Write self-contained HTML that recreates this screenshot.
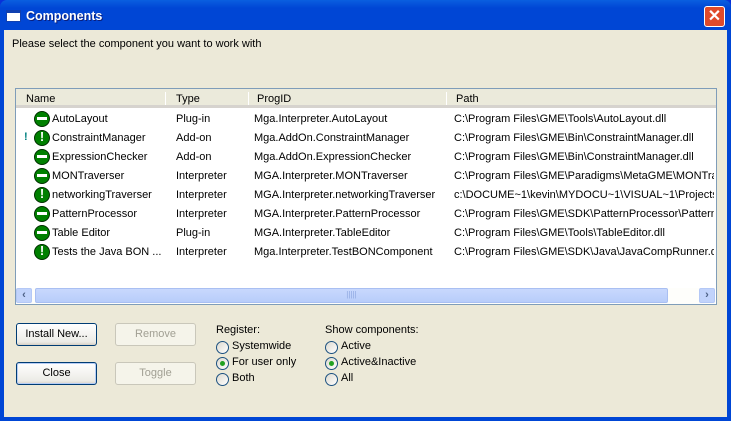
<!DOCTYPE html>
<html><head><style>
*{margin:0;padding:0;box-sizing:border-box}
body{width:731px;height:421px;overflow:hidden;font-family:Tahoma,"Liberation Sans",sans-serif;font-size:11px;color:#000;background:#0831d9}
.win{position:absolute;left:0;top:0;width:731px;height:421px;background:linear-gradient(#0a5fe0,#0046d5 8px,#0046d5);border-radius:7px 7px 0 0}
.title{position:absolute;left:26px;top:9px;color:#fff;font-weight:bold;font-size:12.5px;font-family:"Liberation Sans",sans-serif;text-shadow:1px 1px #0a1e7a}
.ticon{position:absolute;left:6px;top:10px;width:15px;height:12px;background:#fff;border:1px solid #1040b0;border-top-width:3px}
.close{position:absolute;left:704px;top:6px;width:21px;height:21px;background:#e04a2a;border:1px solid #fff;border-radius:3px;color:#fff;font-weight:bold;font-size:16px;line-height:19px;text-align:center}
.client{position:absolute;left:4px;top:30px;width:723px;height:387px;background:#ece9d8}
.abs{position:absolute;white-space:nowrap}
.list{position:absolute;left:15px;top:88px;width:702px;height:217px;background:#fff;border:1px solid #7f9db9;overflow:hidden}
.hdr{position:absolute;left:0;top:0;width:700px;height:19px;background:#ebeadb;border-bottom:3px solid #d6d3ce}
.sep{position:absolute;top:3px;width:1px;height:13px;background:#c7c5b2;border-right:1px solid #fff}
.ic{position:absolute;width:16px;height:16px;border-radius:50%;background:#008000;border:1px solid #003000}
.ic.m::after{content:"";position:absolute;left:2px;top:5px;width:10px;height:3px;background:#fff}
.ic.e::after{content:"!";position:absolute;left:0;top:-2px;width:14px;text-align:center;color:#fff;font-weight:bold;font-size:13px}
.btn{position:absolute;width:81px;height:23px;border:1px solid #003c74;border-radius:3px;background:linear-gradient(#fff,#ecebe6 85%,#d6d0c5);text-align:center;line-height:21px}
.btn.dis{border-color:#c9c7ba;color:#a19f93;background:#f5f4ea}
.btn.def{box-shadow:inset 0 0 0 1px #b6cdf5}
.rad{position:absolute;width:13px;height:13px;border-radius:50%;border:1px solid #1c5180;background:linear-gradient(135deg,#dcd9cf,#fff)}
.rad.on::after{content:"";position:absolute;left:3px;top:3px;width:5px;height:5px;border-radius:50%;background:#21a121}
</style></head><body>
<div class="win">
<div class="ticon"></div>
<div class="title">Components</div>
<div class="close">✕</div>
<div class="client"></div>
<div class="abs" style="left:12px;top:38px">Please select the component you want to work with</div>
<div class="list">
<div class="hdr">
<div class="abs" style="left:10px;top:4px">Name</div>
<div class="sep" style="left:149px"></div>
<div class="abs" style="left:160px;top:4px">Type</div>
<div class="sep" style="left:232px"></div>
<div class="abs" style="left:241px;top:4px">ProgID</div>
<div class="sep" style="left:430px"></div>
<div class="abs" style="left:440px;top:4px">Path</div>
</div>
</div>
<div class="abs" style="left:16px;top:288px;width:699px;height:16px;background:#fefefb"></div>
<div class="abs" style="left:16px;top:288px;width:16px;height:15px;background:#c1d3fb;border:1px solid #b4c8f6;border-radius:2px;color:#4d6185;font-weight:bold;text-align:center;line-height:12px">‹</div>
<div class="abs" style="left:35px;top:288px;width:633px;height:15px;background:linear-gradient(#c8d8fd,#b8cdfa);border:1px solid #a9bff2;border-radius:2px;color:#8fa8e0;text-align:center;font-size:8px;line-height:12px">|||||</div>
<div class="abs" style="left:699px;top:288px;width:16px;height:15px;background:#c1d3fb;border:1px solid #b4c8f6;border-radius:2px;color:#4d6185;font-weight:bold;text-align:center;line-height:12px">›</div>
<div class="btn" style="left:16px;top:323px">Install New...</div>
<div class="btn dis" style="left:115px;top:323px">Remove</div>
<div class="btn def" style="left:16px;top:362px">Close</div>
<div class="btn dis" style="left:115px;top:362px">Toggle</div>
<div class="abs" style="left:216px;top:324px">Register:</div>
<div class="rad" style="left:216px;top:341px"></div><div class="abs" style="left:232px;top:340px">Systemwide</div>
<div class="rad on" style="left:216px;top:357px"></div><div class="abs" style="left:232px;top:356px">For user only</div>
<div class="rad" style="left:216px;top:373px"></div><div class="abs" style="left:232px;top:372px">Both</div>
<div class="abs" style="left:325px;top:324px">Show components:</div>
<div class="rad" style="left:325px;top:341px"></div><div class="abs" style="left:341px;top:340px">Active</div>
<div class="rad on" style="left:325px;top:357px"></div><div class="abs" style="left:341px;top:356px">Active&amp;Inactive</div>
<div class="rad" style="left:325px;top:373px"></div><div class="abs" style="left:341px;top:372px">All</div>
</div>
<div style="position:absolute;left:0;top:1px">
<div class="ic m" style="left:34px;top:110px;position:absolute"></div>
<div class="abs" style="left:52px;top:112px">AutoLayout</div><div class="abs" style="left:176px;top:112px">Plug-in</div><div class="abs" style="left:254px;top:112px">Mga.Interpreter.AutoLayout</div><div class="abs" style="left:454px;top:112px">C:\Program Files\GME\Tools\AutoLayout.dll</div>
<div class="abs" style="left:24px;top:130px;color:#008080;font-weight:bold">!</div>
<div class="ic e" style="left:34px;top:129px;position:absolute"></div>
<div class="abs" style="left:52px;top:131px">ConstraintManager</div><div class="abs" style="left:176px;top:131px">Add-on</div><div class="abs" style="left:254px;top:131px">Mga.AddOn.ConstraintManager</div><div class="abs" style="left:454px;top:131px">C:\Program Files\GME\Bin\ConstraintManager.dll</div>
<div class="ic m" style="left:34px;top:148px;position:absolute"></div>
<div class="abs" style="left:52px;top:150px">ExpressionChecker</div><div class="abs" style="left:176px;top:150px">Add-on</div><div class="abs" style="left:254px;top:150px">Mga.AddOn.ExpressionChecker</div><div class="abs" style="left:454px;top:150px">C:\Program Files\GME\Bin\ConstraintManager.dll</div>
<div class="ic m" style="left:34px;top:167px;position:absolute"></div>
<div class="abs" style="left:52px;top:169px">MONTraverser</div><div class="abs" style="left:176px;top:169px">Interpreter</div><div class="abs" style="left:254px;top:169px">MGA.Interpreter.MONTraverser</div><div class="abs" style="left:454px;top:169px;width:260px;overflow:hidden">C:\Program Files\GME\Paradigms\MetaGME\MONTraverser</div>
<div class="ic e" style="left:34px;top:186px;position:absolute"></div>
<div class="abs" style="left:52px;top:188px">networkingTraverser</div><div class="abs" style="left:176px;top:188px">Interpreter</div><div class="abs" style="left:254px;top:188px">MGA.Interpreter.networkingTraverser</div><div class="abs" style="left:454px;top:188px;width:260px;overflow:hidden">c:\DOCUME~1\kevin\MYDOCU~1\VISUAL~1\Projects</div>
<div class="ic m" style="left:34px;top:205px;position:absolute"></div>
<div class="abs" style="left:52px;top:207px">PatternProcessor</div><div class="abs" style="left:176px;top:207px">Interpreter</div><div class="abs" style="left:254px;top:207px">MGA.Interpreter.PatternProcessor</div><div class="abs" style="left:454px;top:207px;width:260px;overflow:hidden">C:\Program Files\GME\SDK\PatternProcessor\PatternProcessor</div>
<div class="ic m" style="left:34px;top:224px;position:absolute"></div>
<div class="abs" style="left:52px;top:226px">Table Editor</div><div class="abs" style="left:176px;top:226px">Plug-in</div><div class="abs" style="left:254px;top:226px">MGA.Interpreter.TableEditor</div><div class="abs" style="left:454px;top:226px">C:\Program Files\GME\Tools\TableEditor.dll</div>
<div class="ic e" style="left:34px;top:243px;position:absolute"></div>
<div class="abs" style="left:52px;top:245px">Tests the Java BON ...</div><div class="abs" style="left:176px;top:245px">Interpreter</div><div class="abs" style="left:254px;top:245px">Mga.Interpreter.TestBONComponent</div><div class="abs" style="left:454px;top:245px;width:260px;overflow:hidden">C:\Program Files\GME\SDK\Java\JavaCompRunner.dll</div>
</div>
</body></html>
